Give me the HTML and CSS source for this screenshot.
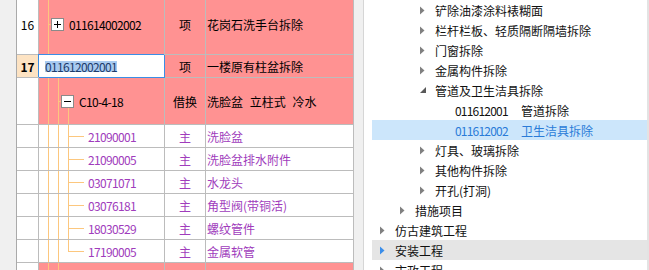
FILE: index.html
```html
<!DOCTYPE html>
<html lang="zh-CN">
<head>
<meta charset="utf-8">
<title>清单</title>
<link rel="stylesheet" href="styles.css">
</head>
<body>
<div class="app">
  <div class="gutter"></div>
  <div class="table">
    <div class="row r16">
      <div class="c num">16</div>
      <div class="c code pink t16">
        <svg class="box" width="13" height="13" viewBox="0 0 13 13"><rect x="0.5" y="0.5" width="12" height="12" fill="#fff" stroke="#8a8a8a"/><path d="M3 6.5h7M6.5 3v7" stroke="#000"/></svg>
        <span class="cd">011614002002</span>
      </div>
      <div class="c unit pink">项</div>
      <div class="c name pink">花岗石洗手台拆除</div>
    </div>
    <div class="row r17">
      <div class="c num cur">17</div>
      <div class="c code edit"><span class="seltext">011612002001</span></div>
      <div class="c unit pink">项</div>
      <div class="c name pink">一楼原有柱盆拆除</div>
    </div>
    <div class="row rq">
      <div class="c num"></div>
      <div class="c code pink tq">
        <svg class="box" width="13" height="13" viewBox="0 0 13 13"><rect x="0.5" y="0.5" width="12" height="12" fill="#fff" stroke="#8a8a8a"/><path d="M3 6.5h7" stroke="#000"/></svg>
        <span class="cd">C10-4-18</span>
      </div>
      <div class="c unit pink">借换</div>
      <div class="c name pink ws">洗脸盆 立柱式 冷水</div>
    </div>
    <div class="row rs">
      <div class="c num"></div>
      <div class="c code ts"><span class="cd purple">21090001</span></div>
      <div class="c unit purple">主</div>
      <div class="c name purple">洗脸盆</div>
    </div>
    <div class="row rs">
      <div class="c num"></div>
      <div class="c code ts"><span class="cd purple">21090005</span></div>
      <div class="c unit purple">主</div>
      <div class="c name purple">洗脸盆排水附件</div>
    </div>
    <div class="row rs">
      <div class="c num"></div>
      <div class="c code ts"><span class="cd purple">03071071</span></div>
      <div class="c unit purple">主</div>
      <div class="c name purple">水龙头</div>
    </div>
    <div class="row rs">
      <div class="c num"></div>
      <div class="c code ts"><span class="cd purple">03076181</span></div>
      <div class="c unit purple">主</div>
      <div class="c name purple">角型阀(带铜活)</div>
    </div>
    <div class="row rs">
      <div class="c num"></div>
      <div class="c code ts"><span class="cd purple">18030529</span></div>
      <div class="c unit purple">主</div>
      <div class="c name purple">螺纹管件</div>
    </div>
    <div class="row rs">
      <div class="c num"></div>
      <div class="c code tsl"><span class="cd purple">17190005</span></div>
      <div class="c unit purple">主</div>
      <div class="c name purple">金属软管</div>
    </div>
    <div class="row rs">
      <div class="c num"></div>
      <div class="c code pink tb"></div>
      <div class="c unit pink"></div>
      <div class="c name pink"></div>
    </div>
  </div>
  <div class="split"></div>
  <div class="tree">
    <div class="node l2"><span class="arr"><svg width="5" height="9" viewBox="0 0 5 9"><polygon points="0,0.5 4.5,4.5 0,8.5" fill="#808080"/></svg></span>铲除油漆涂料裱糊面</div>
    <div class="node l2"><span class="arr"><svg width="5" height="9" viewBox="0 0 5 9"><polygon points="0,0.5 4.5,4.5 0,8.5" fill="#808080"/></svg></span>栏杆栏板、轻质隔断隔墙拆除</div>
    <div class="node l2"><span class="arr"><svg width="5" height="9" viewBox="0 0 5 9"><polygon points="0,0.5 4.5,4.5 0,8.5" fill="#808080"/></svg></span>门窗拆除</div>
    <div class="node l2"><span class="arr"><svg width="5" height="9" viewBox="0 0 5 9"><polygon points="0,0.5 4.5,4.5 0,8.5" fill="#808080"/></svg></span>金属构件拆除</div>
    <div class="node l2"><span class="arr"><svg width="6" height="6" viewBox="0 0 6 6"><polygon points="6,0 6,6 0,6" fill="#595959"/></svg></span>管道及卫生洁具拆除</div>
    <div class="node l3"><span class="arr"></span><span class="code2">011612001</span>管道拆除</div>
    <div class="node l3 selrow"><span class="arr"></span><span class="code2">011612002</span>卫生洁具拆除</div>
    <div class="node l2"><span class="arr"><svg width="5" height="9" viewBox="0 0 5 9"><polygon points="0,0.5 4.5,4.5 0,8.5" fill="#808080"/></svg></span>灯具、玻璃拆除</div>
    <div class="node l2"><span class="arr"><svg width="5" height="9" viewBox="0 0 5 9"><polygon points="0,0.5 4.5,4.5 0,8.5" fill="#808080"/></svg></span>其他构件拆除</div>
    <div class="node l2"><span class="arr"><svg width="5" height="9" viewBox="0 0 5 9"><polygon points="0,0.5 4.5,4.5 0,8.5" fill="#808080"/></svg></span>开孔(打洞)</div>
    <div class="node l1"><span class="arr"><svg width="5" height="9" viewBox="0 0 5 9"><polygon points="0,0.5 4.5,4.5 0,8.5" fill="#808080"/></svg></span>措施项目</div>
    <div class="node l0"><span class="arr"><svg width="5" height="9" viewBox="0 0 5 9"><polygon points="0,0.5 4.5,4.5 0,8.5" fill="#808080"/></svg></span>仿古建筑工程</div>
    <div class="node l0 hov"><span class="arr"><svg width="5" height="9" viewBox="0 0 5 9"><polygon points="0,0.5 4.5,4.5 0,8.5" fill="#3b8eea"/></svg></span>安装工程</div>
    <div class="node l0"><span class="arr"><svg width="5" height="9" viewBox="0 0 5 9"><polygon points="0,0.5 4.5,4.5 0,8.5" fill="#808080"/></svg></span>市政工程</div>
  </div>
</div>
</body>
</html>
```
FILE: styles.css
```css
:root {
  --ln: #fcc77e;
  --grid: #bcbcbc;
  --pink: #ff9292;
}
html, body { margin: 0; padding: 0; }
body {
  width: 649px;
  height: 270px;
  overflow: hidden;
  background: #fff;
  font-family: "Noto Sans CJK SC", "Noto Sans", sans-serif;
  font-size: 12px;
  color: #000;
}
.app { display: flex; height: 270px; overflow: hidden; }
.gutter {
  width: 16px; flex: none;
  background: #f0f0f0;
  border-right: 1px solid #aaaaaa;
}
.table { width: 337px; flex: none; display: flex; flex-direction: column; }
.row { display: flex; flex: none; }
.c {
  display: flex;
  align-items: center;
  flex: none;
  border-right: 1px solid var(--grid);
  border-bottom: 1px solid var(--grid);
  white-space: nowrap;
  overflow: hidden;
}
.r16 { margin-top: -6px; }
.r16 .c { height: 60px; }
.r17 .c { height: 22px; }
.rq .c { height: 46px; }
.rs .c { height: 22px; }

.num { width: 21px; justify-content: center; background: #fff; font-size: 12px; }
.num.cur { background: #fde3c3; font-weight: bold; }
.code { width: 125px; }
.unit { width: 40px; justify-content: center; }
.name { width: 146px; padding-left: 1px; }
.pink { background-color: var(--pink); }
.purple { color: #a03cbc; }
.ws { word-spacing: 4px; }
.cd { letter-spacing: -0.65px; }

.t16 { padding-left: 12px; width: 113px; }
.t16 .box { margin-right: 5px; }
.tq { padding-left: 22px; width: 103px; }
.tq .box { margin-right: 5px; }
.ts, .tsl { padding-left: 49px; width: 76px; background-color: #fff; }

.t16 {
  background-image: linear-gradient(var(--ln), var(--ln)), linear-gradient(var(--ln), var(--ln));
  background-size: 1px 100%, 3px 1px;
  background-position: 9px 0, 9px 50%;
  background-repeat: no-repeat;
}
.tq {
  background-image: linear-gradient(var(--ln), var(--ln)), linear-gradient(var(--ln), var(--ln)),
                    linear-gradient(var(--ln), var(--ln)), linear-gradient(var(--ln), var(--ln));
  background-size: 1px 100%, 1px 100%, 3px 1px, 1px 50%;
  background-position: 9px 0, 19px 0, 19px 50%, 29px 100%;
  background-repeat: no-repeat;
}
.ts {
  background-image: linear-gradient(var(--ln), var(--ln)), linear-gradient(var(--ln), var(--ln)),
                    linear-gradient(var(--ln), var(--ln)), linear-gradient(var(--ln), var(--ln));
  background-size: 1px 100%, 1px 100%, 1px 100%, 16px 1px;
  background-position: 9px 0, 19px 0, 29px 0, 29px 50%;
  background-repeat: no-repeat;
}
.tsl {
  background-image: linear-gradient(var(--ln), var(--ln)), linear-gradient(var(--ln), var(--ln)),
                    linear-gradient(var(--ln), var(--ln)), linear-gradient(var(--ln), var(--ln));
  background-size: 1px 100%, 1px 100%, 1px 50%, 16px 1px;
  background-position: 9px 0, 19px 0, 29px 0, 29px 50%;
  background-repeat: no-repeat;
}
.tb {
  background-image: linear-gradient(var(--ln), var(--ln)), linear-gradient(var(--ln), var(--ln));
  background-size: 1px 100%, 1px 100%;
  background-position: 9px 0, 19px 0;
  background-repeat: no-repeat;
}

.edit {
  background: #fff;
  width: 119px;
  padding-left: 6px;
  border-right-color: #3a8ee6;
  border-bottom-color: #3a8ee6;
  box-shadow: -1px -1px 0 #3a8ee6;
}
.seltext {
  display: inline-block;
  height: 11px;
  line-height: 11px;
  background: #a8caf0;
  color: #1c3b6c;
  letter-spacing: -0.65px;
}

.split {
  width: 9px; flex: none;
  background: #f0f0f0;
  border-right: 1px solid #d6d6d6;
}
.tree {
  width: 275px; flex: none;
  padding-left: 8px;
  border-right: 2px solid #e3e3e3;
  background: #fff;
  display: flex; flex-direction: column;
}
.node {
  height: 20px; flex: none;
  display: flex; align-items: center;
  white-space: nowrap;
  color: #111;
}
.l1 { padding-left: 20px; }
.l2 { padding-left: 40px; }
.l3 { padding-left: 60px; }
.arr { width: 23px; flex: none; display: flex; align-items: center; }
.arr svg { margin-left: 8px; display: block; }
.code2 { width: 66px; flex: none; letter-spacing: -0.8px; }
.selrow { background: #cce6fb; color: #2a7bd8; }
.hov { background: #e5e5e5; }
```
